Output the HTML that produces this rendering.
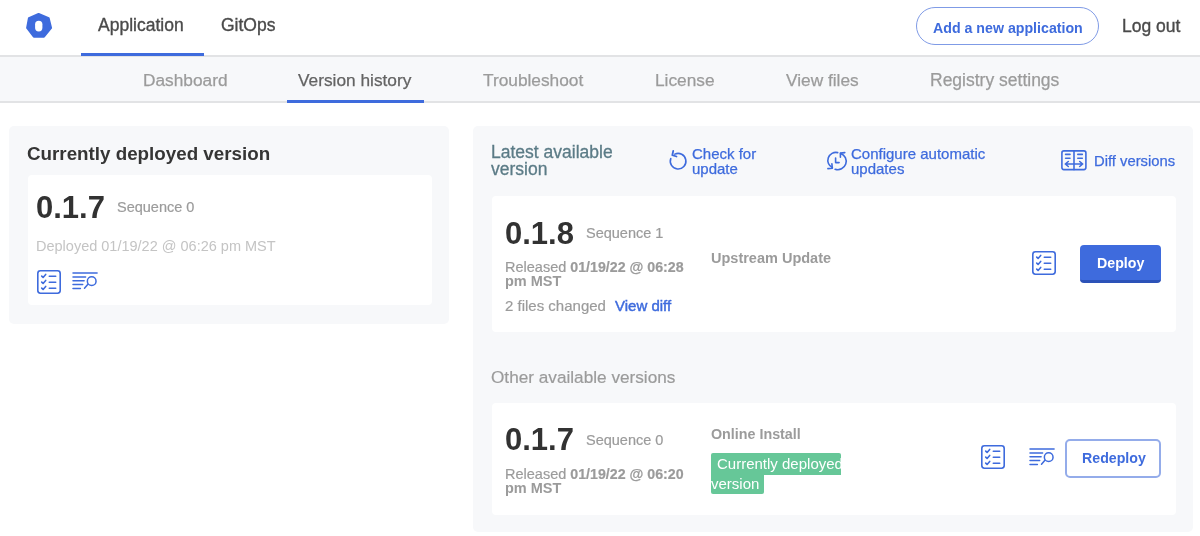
<!DOCTYPE html>
<html><head><meta charset="utf-8"><style>
*{margin:0;padding:0;box-sizing:border-box}
html,body{width:1200px;height:536px;overflow:hidden;background:#fff;font-family:"Liberation Sans",sans-serif}
.t{position:absolute;white-space:nowrap;line-height:1;will-change:transform}
.r{position:absolute}
</style></head><body>
<div class="r" style="left:0px;top:55px;width:1200px;height:2px;background:#e2e3e5"></div>
<div class="r" style="left:0px;top:57px;width:1200px;height:44px;background:#f7f8fa"></div>
<div class="r" style="left:0px;top:101px;width:1200px;height:2px;background:#e2e3e5"></div>
<svg class="r" style="left:22px;top:9px" width="34" height="34" viewBox="0 0 34 34">
<path d="M16.6 5.1L26.6 9.3L29 18.9L21.9 27.6H11.9L5.2 18.9L7 9.3Z" fill="#3e6bdd" stroke="#3e6bdd" stroke-width="2.2" stroke-linejoin="round"/>
<rect x="13.1" y="11.7" width="7.3" height="10.8" rx="3.65" fill="#fff"/>
</svg>
<div class="t" style="left:98px;top:17.18px;font-size:17.5px;color:#4a4a4a;font-weight:400;-webkit-text-stroke:0.35px #4a4a4a">Application</div>
<div class="r" style="left:81px;top:53px;width:123px;height:3px;background:#3e6bdd"></div>
<div class="t" style="left:221px;top:17.18px;font-size:17.5px;color:#4a4a4a;font-weight:400;-webkit-text-stroke:0.35px #4a4a4a">GitOps</div>
<div class="r" style="left:916px;top:7px;width:183px;height:38px;border:1.5px solid #7f9be6;border-radius:19px"></div>
<div class="t" style="left:932.5px;top:20.68px;font-size:14.2px;color:#3e6bdd;font-weight:700;">Add a new application</div>
<div class="t" style="left:1122px;top:17.98px;font-size:17.5px;color:#4a4a4a;font-weight:400;-webkit-text-stroke:0.35px #4a4a4a">Log out</div>
<div class="t" style="left:142.5px;top:71.85px;font-size:17.3px;color:#9b9b9b;font-weight:400;-webkit-text-stroke:0.25px #9b9b9b">Dashboard</div>
<div class="t" style="left:298px;top:71.85px;font-size:17.3px;color:#636363;font-weight:400;-webkit-text-stroke:0.25px #636363">Version history</div>
<div class="t" style="left:483px;top:71.85px;font-size:17.3px;color:#9b9b9b;font-weight:400;-webkit-text-stroke:0.25px #9b9b9b">Troubleshoot</div>
<div class="t" style="left:655px;top:71.85px;font-size:17.3px;color:#9b9b9b;font-weight:400;-webkit-text-stroke:0.25px #9b9b9b">License</div>
<div class="t" style="left:785.5px;top:71.85px;font-size:17.3px;color:#9b9b9b;font-weight:400;-webkit-text-stroke:0.25px #9b9b9b">View files</div>
<div class="t" style="left:929.5px;top:71.68px;font-size:17.5px;color:#9b9b9b;font-weight:400;-webkit-text-stroke:0.25px #9b9b9b">Registry settings</div>
<div class="r" style="left:287px;top:100px;width:137px;height:3px;background:#3e6bdd"></div>
<div class="r" style="left:9px;top:126px;width:440px;height:198px;background:#f7f8fa;border-radius:5px"></div>
<div class="t" style="left:26.8px;top:144.98px;font-size:18.8px;color:#353535;font-weight:700;">Currently deployed version</div>
<div class="r" style="left:28px;top:175px;width:404px;height:130px;background:#fff;border-radius:4px"></div>
<div class="t" style="left:35.5px;top:191.55px;font-size:31px;color:#323232;font-weight:700;">0.1.7</div>
<div class="t" style="left:117px;top:199.72px;font-size:14.5px;color:#9b9b9b;font-weight:400;-webkit-text-stroke:0.2px #9b9b9b">Sequence 0</div>
<div class="t" style="left:36.2px;top:238.82px;font-size:14.5px;color:#c4c4c4;font-weight:400;">Deployed 01/19/22 @ 06:26 pm MST</div>
<svg class="r" style="left:37px;top:269.6px" width="24" height="24" viewBox="0 0 24 24" fill="none" stroke="#3e6bdd" stroke-width="1.6" stroke-linecap="round" stroke-linejoin="round">
<rect x="0.8" y="0.8" width="22.4" height="22.4" rx="2.6"/>
<path d="M4.7 6.1L6.1 7.4L8.7 4.4M4.7 12.1L6.1 13.4L8.7 10.4M4.7 18.1L6.1 19.4L8.7 16.4"/>
<path d="M12.3 6.3H18.7M12.3 12.3H18.7M12.3 18.3H18.7"/>
</svg>
<svg class="r" style="left:72.1px;top:272.3px" width="27" height="19" viewBox="0 0 27 19" fill="none" stroke="#3e6bdd" stroke-width="1.5" stroke-linecap="round">
<path d="M1 1H25.1M1 4.9H13.6M1 8.75H12.1M1 12.6H10.7M1 16.45H8.4M15.7 12.4L12.5 16.2"/>
<circle cx="19.7" cy="9.2" r="4.35"/>
</svg>
<div class="r" style="left:473px;top:126px;width:720px;height:406px;background:#f7f8fa;border-radius:5px"></div>
<div class="t" style="left:491px;top:144.18px;font-size:17.5px;color:#5b7b86;font-weight:400;-webkit-text-stroke:0.3px #5b7b86">Latest available</div>
<div class="t" style="left:491px;top:161.18px;font-size:17.5px;color:#5b7b86;font-weight:400;-webkit-text-stroke:0.3px #5b7b86">version</div>
<svg class="r" style="left:664px;top:146px" width="28" height="28" viewBox="0 0 28 28" fill="none" stroke="#3e6bdd" stroke-width="1.6" stroke-linecap="round" stroke-linejoin="round">
<path d="M6.77 12.53A7.8 7.8 0 1 0 10.8 8.13"/>
<path d="M9.2 5.0L8.3 9.2L12.5 10.5" stroke-width="1.8"/>
</svg>
<div class="t" style="left:692px;top:145.70px;font-size:15px;color:#3e6bdd;font-weight:400;-webkit-text-stroke:0.25px #3e6bdd">Check for</div>
<div class="t" style="left:692px;top:160.80px;font-size:15px;color:#3e6bdd;font-weight:400;-webkit-text-stroke:0.25px #3e6bdd">update</div>
<svg class="r" style="left:822px;top:146px" width="28" height="28" viewBox="0 0 28 28" fill="none" stroke="#3e6bdd" stroke-width="1.6" stroke-linecap="round" stroke-linejoin="round">
<path d="M15.7 6.6A8 8 0 0 0 10.4 21.6"/>
<path d="M9.9 17.8L10.3 22.2L5.9 22.6"/>
<path d="M13.1 23.2A8 8 0 0 0 18.6 7.4"/>
<path d="M22.8 6.6L18.4 7.1L18.4 11.2"/>
<path d="M13.6 12V16.6H17.1"/>
</svg>
<div class="t" style="left:850.5px;top:145.70px;font-size:15px;color:#3e6bdd;font-weight:400;-webkit-text-stroke:0.25px #3e6bdd">Configure automatic</div>
<div class="t" style="left:850.5px;top:160.80px;font-size:15px;color:#3e6bdd;font-weight:400;-webkit-text-stroke:0.25px #3e6bdd">updates</div>
<svg class="r" style="left:1056px;top:146px" width="36" height="28" viewBox="0 0 36 28" fill="none" stroke="#3e6bdd" stroke-width="1.6" stroke-linecap="round" stroke-linejoin="round">
<rect x="5.9" y="4.9" width="24" height="18.7" rx="2"/>
<path d="M18 4.9V23.6"/>
<path d="M9.6 8.4H14M9.6 12.3H14M21.8 8.4H26.3M21.8 12.3H26.3"/>
<path d="M9.3 18H26.7M12.3 15.5L9.3 18L12.3 20.5M23.7 15.5L26.7 18L23.7 20.5"/>
</svg>
<div class="t" style="left:1093.7px;top:153.87px;font-size:14.8px;color:#3e6bdd;font-weight:400;-webkit-text-stroke:0.25px #3e6bdd">Diff versions</div>
<div class="r" style="left:492px;top:196px;width:684px;height:136px;background:#fff;border-radius:4px"></div>
<div class="t" style="left:504.5px;top:217.95px;font-size:31px;color:#323232;font-weight:700;">0.1.8</div>
<div class="t" style="left:586px;top:226.02px;font-size:14.5px;color:#9b9b9b;font-weight:400;-webkit-text-stroke:0.2px #9b9b9b">Sequence 1</div>
<div class="t" style="left:505px;top:259.72px;font-size:14.5px;color:#9b9b9b;font-weight:400;-webkit-text-stroke:0.2px #9b9b9b">Released <b style="font-size:14.2px">01/19/22 @ 06:28</b></div>
<div class="t" style="left:505px;top:273.72px;font-size:14.5px;color:#9b9b9b;font-weight:400;"><b>pm MST</b></div>
<div class="t" style="left:505px;top:298.10px;font-size:15px;color:#9b9b9b;font-weight:400;-webkit-text-stroke:0.2px #9b9b9b">2 files changed</div>
<div class="t" style="left:615px;top:298.10px;font-size:15px;color:#3e6bdd;font-weight:400;-webkit-text-stroke:0.45px #3e6bdd">View diff</div>
<div class="t" style="left:711px;top:250.52px;font-size:14.5px;color:#9b9b9b;font-weight:700;">Upstream Update</div>
<svg class="r" style="left:1032px;top:250.6px" width="24" height="24" viewBox="0 0 24 24" fill="none" stroke="#3e6bdd" stroke-width="1.6" stroke-linecap="round" stroke-linejoin="round">
<rect x="0.8" y="0.8" width="22.4" height="22.4" rx="2.6"/>
<path d="M4.7 6.1L6.1 7.4L8.7 4.4M4.7 12.1L6.1 13.4L8.7 10.4M4.7 18.1L6.1 19.4L8.7 16.4"/>
<path d="M12.3 6.3H18.7M12.3 12.3H18.7M12.3 18.3H18.7"/>
</svg>
<div class="r" style="left:1080px;top:245px;width:81px;height:38px;background:#3e6bdd;border-radius:4px;border-bottom:3px solid #2c52b8"></div>
<div class="t" style="left:1097.3px;top:255.98px;font-size:14.2px;color:#fff;font-weight:700;">Deploy</div>
<div class="t" style="left:491.3px;top:368.74px;font-size:17.2px;color:#9b9b9b;font-weight:400;-webkit-text-stroke:0.2px #9b9b9b">Other available versions</div>
<div class="r" style="left:492px;top:403px;width:684px;height:112px;background:#fff;border-radius:4px"></div>
<div class="t" style="left:504.7px;top:423.75px;font-size:31px;color:#323232;font-weight:700;">0.1.7</div>
<div class="t" style="left:586px;top:433.32px;font-size:14.5px;color:#9b9b9b;font-weight:400;-webkit-text-stroke:0.2px #9b9b9b">Sequence 0</div>
<div class="t" style="left:505px;top:466.72px;font-size:14.5px;color:#9b9b9b;font-weight:400;-webkit-text-stroke:0.2px #9b9b9b">Released <b style="font-size:14.2px">01/19/22 @ 06:20</b></div>
<div class="t" style="left:505px;top:481.12px;font-size:14.5px;color:#9b9b9b;font-weight:400;"><b>pm MST</b></div>
<div class="t" style="left:711.3px;top:426.89px;font-size:14.3px;color:#9b9b9b;font-weight:700;">Online Install</div>
<div class="r" style="left:711.4px;top:452.8px;width:130.1px;height:21.8px;background:#66c798;border-radius:2px 2px 0 0"></div>
<div class="r" style="left:711.4px;top:474.6px;width:52.4px;height:19px;background:#66c798;border-radius:0 0 2px 2px"></div>
<div class="t" style="left:716.5px;top:456.30px;font-size:15px;color:#fff;font-weight:400;">Currently deployed</div>
<div class="t" style="left:711px;top:475.80px;font-size:15px;color:#fff;font-weight:400;">version</div>
<svg class="r" style="left:981px;top:445.3px" width="24" height="24" viewBox="0 0 24 24" fill="none" stroke="#3e6bdd" stroke-width="1.6" stroke-linecap="round" stroke-linejoin="round">
<rect x="0.8" y="0.8" width="22.4" height="22.4" rx="2.6"/>
<path d="M4.7 6.1L6.1 7.4L8.7 4.4M4.7 12.1L6.1 13.4L8.7 10.4M4.7 18.1L6.1 19.4L8.7 16.4"/>
<path d="M12.3 6.3H18.7M12.3 12.3H18.7M12.3 18.3H18.7"/>
</svg>
<svg class="r" style="left:1028.7px;top:448.1px" width="27" height="19" viewBox="0 0 27 19" fill="none" stroke="#3e6bdd" stroke-width="1.5" stroke-linecap="round">
<path d="M1 1H25.1M1 4.9H13.6M1 8.75H12.1M1 12.6H10.7M1 16.45H8.4M15.7 12.4L12.5 16.2"/>
<circle cx="19.7" cy="9.2" r="4.35"/>
</svg>
<div class="r" style="left:1065px;top:439px;width:96px;height:39px;border:2px solid #94acea;border-radius:5px"></div>
<div class="t" style="left:1081.5px;top:451.48px;font-size:14.2px;color:#3e6bdd;font-weight:700;">Redeploy</div>
</body></html>
